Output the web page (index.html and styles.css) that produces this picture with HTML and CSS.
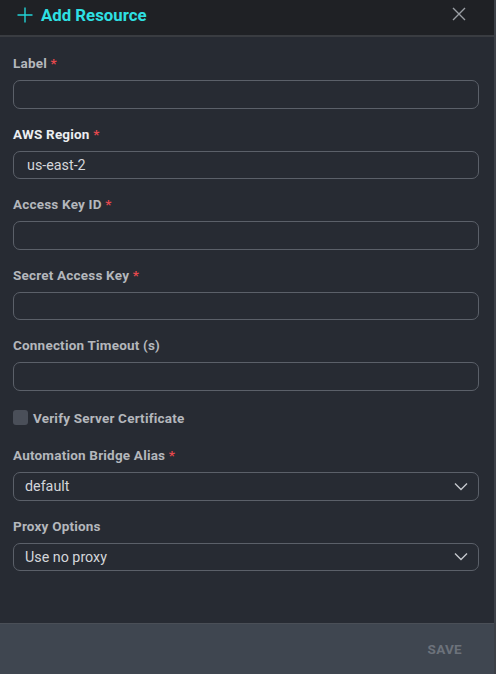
FILE: index.html
```html
<!DOCTYPE html>
<html>
<head>
<meta charset="utf-8">
<link rel="stylesheet" href="styles.css">
</head>
<body>
<div class="dialog">
  <header class="head">
    <div class="title">
      <svg class="plus" width="16" height="16" viewBox="0 0 16 16"><path d="M8 0.5V15.5M0.5 8H15.5" stroke="#22d3d6" stroke-width="1.4" fill="none"/></svg>
      <span>Add Resource</span>
    </div>
    <svg class="close" width="14" height="14" viewBox="0 0 14 14"><path d="M1 1L13 13M13 1L1 13" stroke="#9a9ea4" stroke-width="1.4" fill="none"/></svg>
  </header>
  <main class="body">
    <div class="field">
      <label class="lbl">Label <span class="req">*</span></label>
      <div class="input"></div>
    </div>
    <div class="field">
      <label class="lbl bright">AWS Region <span class="req">*</span></label>
      <div class="input val">us-east-2</div>
    </div>
    <div class="field">
      <label class="lbl">Access Key ID <span class="req">*</span></label>
      <div class="input"></div>
    </div>
    <div class="field">
      <label class="lbl">Secret Access Key <span class="req">*</span></label>
      <div class="input"></div>
    </div>
    <div class="field">
      <label class="lbl">Connection Timeout (s)</label>
      <div class="input"></div>
    </div>
    <div class="check">
      <span class="box"></span>
      <span class="lbl">Verify Server Certificate</span>
    </div>
    <div class="field">
      <label class="lbl">Automation Bridge Alias <span class="req">*</span></label>
      <div class="input select"><span>default</span>
        <svg width="14" height="9" viewBox="0 0 14 9"><path d="M1 1.5L7 7.5L13 1.5" stroke="#c4c7cc" stroke-width="1.4" fill="none"/></svg>
      </div>
    </div>
    <div class="field">
      <label class="lbl">Proxy Options</label>
      <div class="input select"><span>Use no proxy</span>
        <svg width="14" height="9" viewBox="0 0 14 9"><path d="M1 1.5L7 7.5L13 1.5" stroke="#c4c7cc" stroke-width="1.4" fill="none"/></svg>
      </div>
    </div>
  </main>
  <footer class="foot">
    <span class="save">SAVE</span>
  </footer>
</div>
</body>
</html>
```
FILE: styles.css
```css
html, body {
  margin: 0;
  padding: 0;
  height: 100%;
  background: #272b33;
}
body {
  font-family: Roboto, "Liberation Sans", sans-serif;
}
.dialog {
  width: 494px;
  height: 674px;
  display: flex;
  flex-direction: column;
  background: #272b33;
  border-right: 2px solid #3c4047;
}
.head {
  height: 37px;
  box-sizing: border-box;
  background: #1f2125;
  border-bottom: 2px solid #393c41;
  display: flex;
  align-items: center;
  justify-content: space-between;
  padding: 0 28px 0 17px;
}
.title {
  display: flex;
  align-items: center;
  gap: 8px;
  color: #2ee0e3;
  font-weight: 700;
  font-size: 16.8px;
  margin-top: -6px;
}
.close {
  margin-top: -7px;
}
.body {
  flex: 1;
  padding: 18px 15px 0 13px;
  display: flex;
  flex-direction: column;
}
.field {
  display: flex;
  flex-direction: column;
  margin-bottom: 17px;
}
.lbl {
  font-size: 13.5px;
  font-weight: 700;
  line-height: 16px;
  color: #b4b7bc;
  letter-spacing: 0.2px;
}
.lbl.bright {
  color: #eceef0;
}
.req {
  color: #e5484d;
}
.input {
  margin-top: 9px;
  height: 28.5px;
  box-sizing: border-box;
  border: 1px solid #5b6069;
  border-radius: 7px;
  font-size: 14.3px;
  color: #d4d6da;
  display: flex;
  align-items: center;
  padding: 0 12px;
}
.input.val {
  padding-left: 13px;
}
.select {
  justify-content: space-between;
  padding: 0 10px 0 11px;
}
.check {
  display: flex;
  align-items: center;
  gap: 5px;
  margin-top: 2px;
  margin-bottom: 21.5px;
}
.box {
  width: 15px;
  height: 15px;
  border-radius: 3px;
  background: #4a4f59;
}
.foot {
  height: 51px;
  box-sizing: border-box;
  background: #3f4650;
  border-top: 1px solid #4a4f57;
  display: flex;
  align-items: center;
  justify-content: flex-end;
  padding-right: 32px;
}
.save {
  color: #6c727b;
  font-size: 13.5px;
  font-weight: 700;
  letter-spacing: 0.3px;
}
```
